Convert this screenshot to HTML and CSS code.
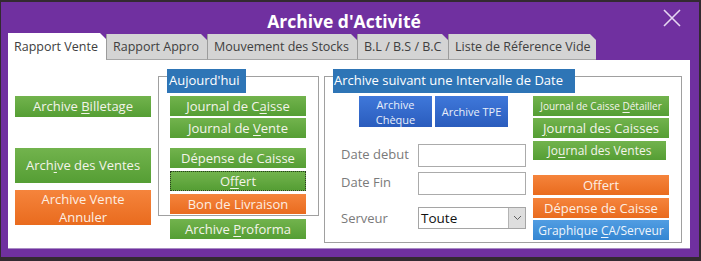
FILE: index.html
```html
<!DOCTYPE html>
<html lang="fr">
<head>
  <meta charset="UTF-8">
  <title>Archive d'Activité</title>
  <link rel="stylesheet" href="styles.css">
</head>
<body>
  <div class="window">
    <header class="titlebar">
      <h1>Archive d'Activité</h1>
      <span class="close">
        <svg width="18" height="18" viewBox="0 0 18 18"><path d="M1 1 L17 17 M17 1 L1 17" stroke="#e6d8f2" stroke-width="1.6" fill="none"/></svg>
      </span>
    </header>

    <nav class="tabs">
      <div class="tab active t1">Rapport Vente</div>
      <div class="tab t2">Rapport Appro</div>
      <div class="tab t3">Mouvement des Stocks</div>
      <div class="tab t4">B.L / B.S / B.C</div>
      <div class="tab t5">Liste de Réference Vide</div>
    </nav>

    <main class="panel">
      <div class="col-left">
        <button class="btn green billetage"><span>Archive <u>B</u>illetage</span></button>
        <button class="btn green tall ventes"><span>Arch<u>i</u>ve des Ventes</span></button>
        <button class="btn orange tall annuler"><span>Archive Vente<br>Annuler</span></button>
      </div>

      <div class="col-mid">
        <div class="frame today">
          <div class="frame-label">Aujourd'hui</div>
          <button class="btn green"><span>Journal de C<u>a</u>isse</span></button>
          <button class="btn green"><span>Journal de <u>V</u>ente</span></button>
          <button class="btn green spaced"><span>Dépense de Caisse</span></button>
          <button class="btn green focused"><span>O<u>f</u>fert</span></button>
          <button class="btn orange"><span>Bon de Livraison</span></button>
        </div>
        <button class="btn green proforma"><span>Archive <u>P</u>roforma</span></button>
      </div>

      <div class="frame range">
        <div class="frame-label">Archive suivant une Intervalle de Date</div>
        <div class="range-body">
          <div class="range-left">
            <div class="blue-row">
              <button class="btn blue small"><span>Archive<br>Chèque</span></button>
              <button class="btn blue small"><span>Archive TPE</span></button>
            </div>
            <div class="form">
              <label>Date debut</label>
              <input type="text" class="field">
              <label>Date Fin</label>
              <input type="text" class="field">
              <label class="srv">Serveur</label>
              <div class="select">
                <span>Toute</span>
                <span class="select-arrow">
                  <svg width="9" height="6" viewBox="0 0 9 6"><path d="M1 1 L4.5 4.5 L8 1" stroke="#606060" stroke-width="1" fill="none"/></svg>
                </span>
              </div>
            </div>
          </div>
          <div class="range-right">
            <button class="btn green tiny"><span>Journal de Caisse <u>D</u>étailler</span></button>
            <button class="btn green"><span><u>J</u>ournal des Caisses</span></button>
            <button class="btn green jventes"><span>Jo<u>u</u>rnal des Ventes</span></button>
            <button class="btn orange gap"><span>Offert</span></button>
            <button class="btn orange"><span>Dépense de Caisse</span></button>
            <button class="btn sky"><span>Graphique <u>C</u>A/Serveur</span></button>
          </div>
        </div>
      </div>
    </main>
  </div>
</body>
</html>
```

FILE: styles.css
```css
body {
  margin: 0;
  background-color: #332a31;
  font-family: "Open Sans", "Noto Sans", sans-serif;
}

.window {
  margin: 2px 1px 0 1px;
  width: 698px;
  height: 255px;
  background-color: #7030a0;
  box-sizing: border-box;
}

.titlebar {
  height: 31px;
  display: flex;
  align-items: center;
  justify-content: center;
  position: relative;
}
.titlebar h1 {
  margin: 6px 12px 0 0;
  font-size: 17.5px;
  font-weight: bold;
  color: #ffffff;
}
.close {
  position: absolute;
  right: 18px;
  top: 7px;
  display: flex;
}

/* tab strip */
.tabs {
  display: flex;
  align-items: flex-end;
  height: 27px;
  padding-left: 7px;
}
.tab {
  height: 26px;
  box-sizing: border-box;
  padding: 4px 0 0 6px;
  font-size: 12.5px;
  color: #404040;
  background-color: #d4d4d4;
  border-left: 1px solid #9c9c9c;
  border-bottom: 1px solid #a6a6a6;
  clip-path: polygon(0 0, calc(100% - 6px) 0, 100% 6px, 100% 100%, 0 100%);
}
.tab.active {
  height: 27px;
  padding-top: 5px;
  background-color: #ffffff;
  border: none;
}
.t1 { width: 98px; }
.t2 { width: 101px; }
.t3 { width: 150px; }
.t4 { width: 91px; }
.t5 { width: 148px; }

/* white page of the active tab */
.panel {
  margin-left: 7px;
  width: 682px;
  height: 189px;
  box-sizing: border-box;
  background-color: #ffffff;
  border-bottom: 1px solid #a98cc4;
  display: flex;
  align-items: flex-start;
  padding: 16px 0 0 7px;
}

.btn {
  display: flex;
  align-items: center;
  justify-content: center;
  width: 136px;
  height: 20px;
  padding: 0;
  border: none;
  font-family: inherit;
  font-size: 13px;
  line-height: 15px;
  color: #f4f4ea;
  text-align: center;
  box-sizing: border-box;
}
.btn u {
  text-underline-offset: 2px;
}
.green {
  background: linear-gradient(#72b34d, #559e34);
}
.orange {
  background: linear-gradient(#f5843c, #e96b1e);
  color: #fdeee2;
}
.blue {
  background: linear-gradient(#3f78da, #2a5cbd);
  color: #e8eefa;
}
.sky {
  background: linear-gradient(#519de2, #3486d2);
  color: #eef5fc;
}

.col-left {
  display: flex;
  flex-direction: column;
  padding-top: 20px;
}
.billetage { height: 21px; }
.tall { height: 35px; }
.ventes { margin-top: 31px; }
.annuler { margin-top: 7px; line-height: 18px; }

/* group boxes */
.frame {
  border: 1px solid #a0a0a0;
  box-sizing: border-box;
}
.frame-label {
  margin: -8px 0 0 8px;
  height: 24px;
  box-sizing: border-box;
  padding: 2px 0 0 2px;
  background-color: #2e75b6;
  color: #ffffff;
  font-size: 13px;
}

.col-mid {
  margin-left: 7px;
  display: flex;
  flex-direction: column;
}
.today {
  width: 161px;
  padding: 0 0 1px 11px;
  display: flex;
  flex-direction: column;
  gap: 2px;
}
.today .frame-label {
  width: 79px;
  margin-left: -3px;
  margin-bottom: 1px;
}
.today .spaced { margin-top: 8px; }
.today .focused { margin-top: 1px; border: 1px dotted #2b3b20; }
.today .orange { margin-top: 1px; }
.proforma {
  margin: 3px 0 0 12px;
}

.range {
  margin-left: 5px;
  width: 358px;
}
.range .frame-label {
  width: 242px;
  padding-left: 1px;
}
.range-body {
  display: flex;
  padding-bottom: 2px;
}
.range-left {
  width: 208px;
  padding-top: 3px;
}
.blue-row {
  display: flex;
  gap: 3px;
  padding-left: 34px;
}
.small {
  width: 73px;
  height: 31px;
  font-size: 11px;
  line-height: 15px;
}
.form {
  display: grid;
  grid-template-columns: 77px 108px;
  grid-template-rows: 23px 23px 22px;
  row-gap: 5px;
  margin-top: 17px;
  padding-left: 16px;
  align-items: center;
}
.form label {
  font-size: 13px;
  color: #7a7a7a;
  margin-top: -4px;
}
.form label.srv,
.form .select {
  margin-top: 13px;
}
.field {
  width: 108px;
  height: 23px;
  box-sizing: border-box;
  border: 1px solid #ababab;
  margin: 0;
}
.select {
  width: 108px;
  height: 22px;
  box-sizing: border-box;
  border: 1px solid #a5a5a5;
  display: flex;
  align-items: center;
  justify-content: space-between;
  padding-left: 2px;
  font-size: 13.5px;
  color: #111111;
}
.select-arrow {
  width: 17px;
  height: 20px;
  box-sizing: border-box;
  background-color: #dedede;
  border-left: 1px solid #b4b4b4;
  display: flex;
  align-items: center;
  justify-content: center;
}

.range-right {
  width: 136px;
  padding-top: 3px;
  display: flex;
  flex-direction: column;
  gap: 2px;
}
.tiny { font-size: 10px; }
.jventes {
  width: 133px;
  height: 19px;
  margin-top: 1px;
  font-size: 12px;
}
.range-right .gap { margin-top: 13px; }
.range-right .orange + .orange { margin-top: 1px; }
.sky { font-size: 12px; }
```
